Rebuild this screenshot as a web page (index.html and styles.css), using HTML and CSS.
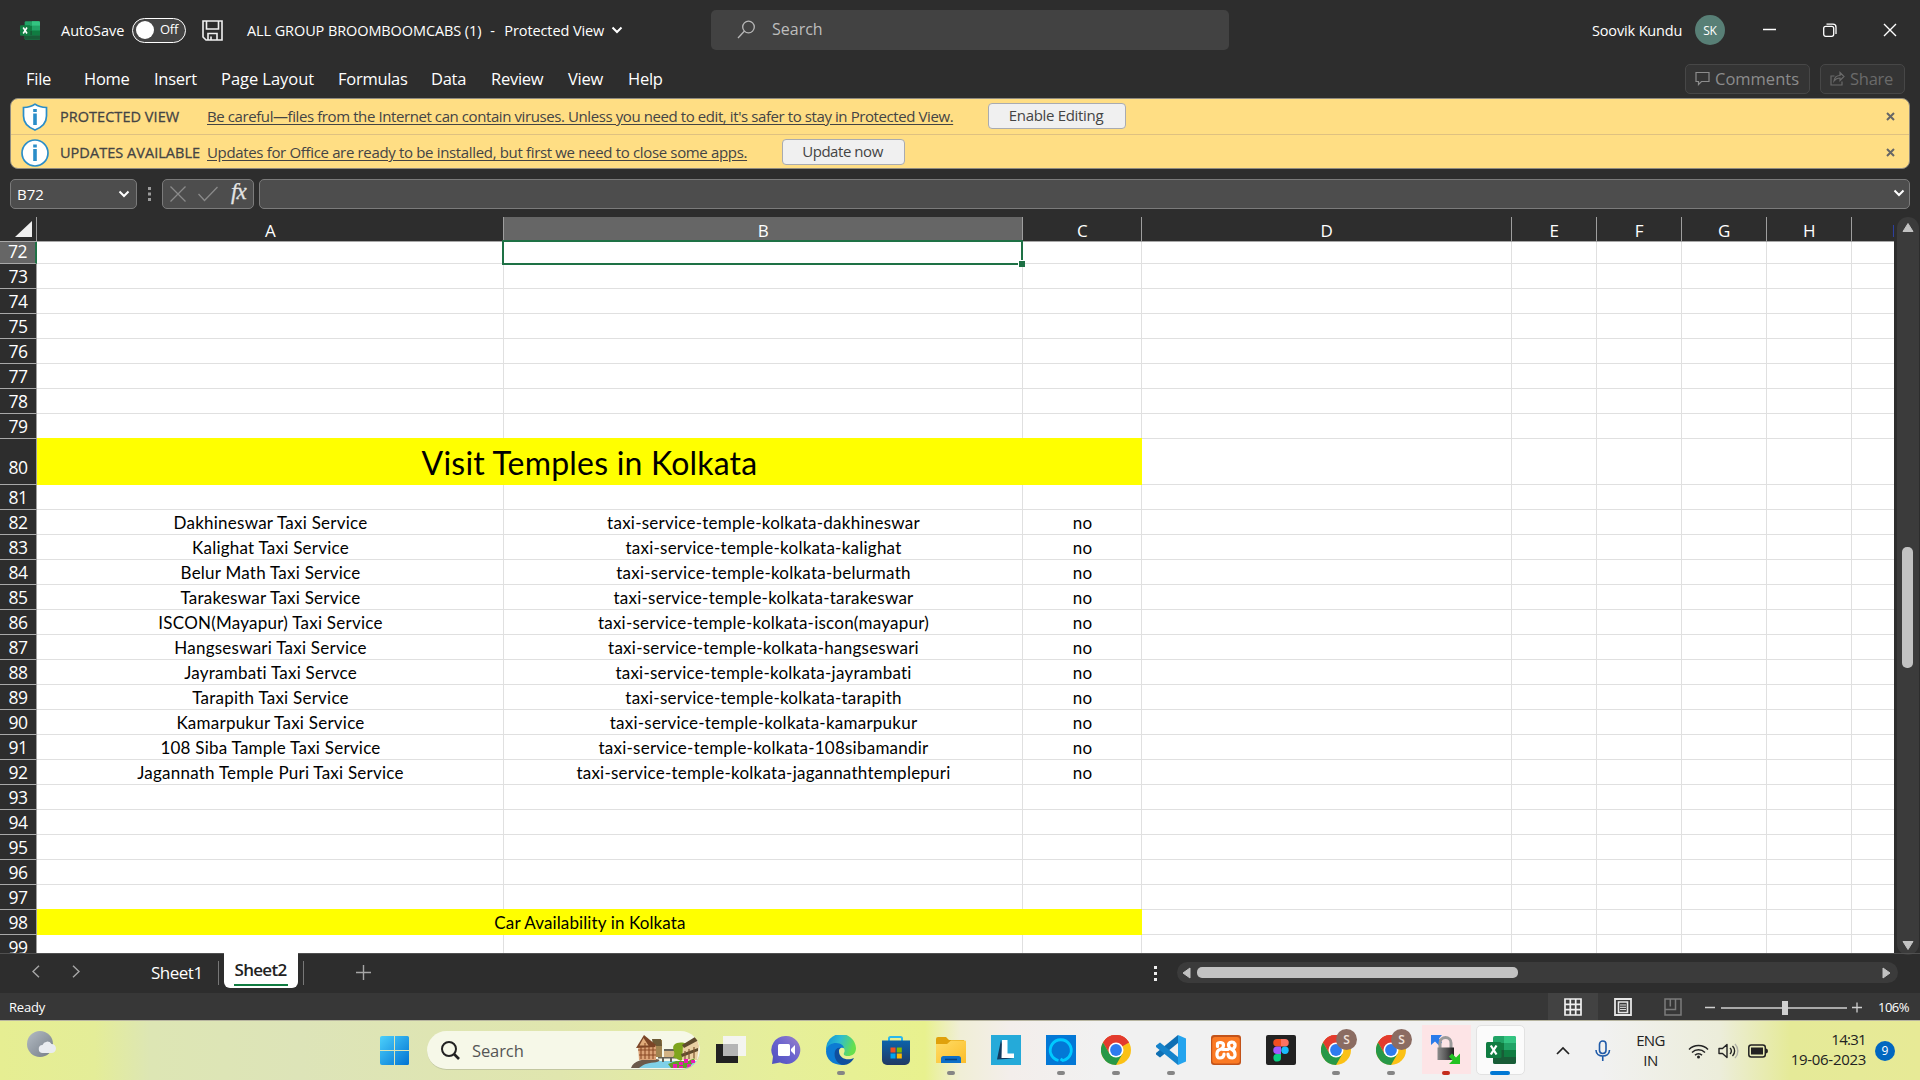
FILE: index.html
```html
<!DOCTYPE html>
<html lang="en">
<head>
<meta charset="utf-8">
<title>ALL GROUP BROOMBOOMCABS (1) - Excel</title>
<link rel="stylesheet" href="styles.css">
</head>
<body>
<svg width="0" height="0" class="defs">
  <defs>
    <linearGradient id="gWin" x1="0" y1="0" x2="1" y2="1"><stop offset="0" stop-color="#4cd0fb"/><stop offset="1" stop-color="#0073d3"/></linearGradient>
    <linearGradient id="gMoon" x1="0" y1="0" x2="1" y2="1"><stop offset="0" stop-color="#b4bcc4"/><stop offset="1" stop-color="#747c86"/></linearGradient>
    <linearGradient id="gChat" x1="1" y1="0" x2="0" y2="1"><stop offset="0" stop-color="#9a83c8"/><stop offset=".5" stop-color="#6a62cf"/><stop offset="1" stop-color="#4d50bd"/></linearGradient>
    <linearGradient id="gEdge" x1="0" y1="0" x2="1" y2=".3"><stop offset="0" stop-color="#0c8fd8"/><stop offset=".5" stop-color="#2dbcd0"/><stop offset="1" stop-color="#66e04c"/></linearGradient>
    <linearGradient id="gStore" x1="0" y1="0" x2="0" y2="1"><stop offset="0" stop-color="#0b63ab"/><stop offset="1" stop-color="#213a63"/></linearGradient>
    <linearGradient id="gFolder" x1="0" y1="0" x2="1" y2="1"><stop offset="0" stop-color="#ffdc66"/><stop offset="1" stop-color="#fbbd2a"/></linearGradient>
    <linearGradient id="gLock" x1="0" y1="0" x2="1" y2="0"><stop offset="0" stop-color="#8c8c8c"/><stop offset=".5" stop-color="#5a5a5a"/><stop offset="1" stop-color="#1e1e1e"/></linearGradient>
    <symbol id="excel" viewBox="0 0 30 30">
      <rect x="7" y="1" width="23" height="28" rx="2" fill="#21a366"/>
      <path d="M18 1h10a2 2 0 0 1 2 2v5H18z" fill="#33c481"/>
      <path d="M7 8h11v7H7z" fill="#107c41"/><path d="M18 8h12v7H18z" fill="#21a366"/>
      <path d="M18 15h12v7H18z" fill="#107c41"/><path d="M7 15h11v7H7z" fill="#185c37"/>
      <path d="M7 22h23v5a2 2 0 0 1-2 2H9a2 2 0 0 1-2-2z" fill="#185c37"/>
      <rect x="0" y="7" width="15.500" height="16" rx="1.500" fill="#107c41"/>
      <path d="M4.800 10.500 10.500 19.500M10.500 10.500 4.800 19.500" stroke="#fff" stroke-width="2.300"/>
    </symbol>
    <symbol id="chrome" viewBox="0 0 30 30">
      <circle cx="15" cy="15" r="15" fill="#fbc116"/>
      <path d="M15 15 2 7.500A15 15 0 0 1 28 7.500z" fill="#e33b2e"/>
      <path d="M15 7.500H28A15 15 0 0 0 2 7.500L8.500 18.700z" fill="#e33b2e"/>
      <path d="M2 7.500 8.500 18.750 15 22 21.500 18.750 15 30A15 15 0 0 1 2 7.500z" fill="#279847"/>
      <circle cx="15" cy="15" r="7.500" fill="#fff"/><circle cx="15" cy="15" r="5.900" fill="#2f7bee"/>
    </symbol>
    <symbol id="chev" viewBox="0 0 12 8"><path d="M1.500 1.500 6 6l4.500-4.500" fill="none" stroke="#fff" stroke-width="2"/></symbol>
  </defs>
</svg>

<header class="titlebar">
  <svg width="20" height="21"><use href="#excel"/></svg>
  <span>AutoSave</span>
  <div class="toggle"><i></i><span>Off</span></div>
  <svg width="21" height="21" viewBox="0 0 21 21" fill="none" stroke="#f0f0f0" stroke-width="1.600"><path d="M1 1h19v19H4l-3-3zM4.500 1v8h12V1M6 20v-6.500h9V20M9 20v-3.500"/></svg>
  <div class="docname"><span class="doc">ALL GROUP BROOMBOOMCABS (1)</span><span class="dash">-</span><span>Protected View</span><svg width="12" height="8"><use href="#chev"/></svg></div>
  <div class="search">
    <svg width="19" height="19" viewBox="0 0 19 19" fill="none" stroke="#b8b8b8" stroke-width="1.300"><circle cx="11.500" cy="7" r="5.800"/><path d="M7.500 11 1 18"/></svg>
    <span>Search</span>
  </div>
  <span class="user">Soovik Kundu</span>
  <span class="avatar">SK</span>
  <svg class="wb" width="14" height="14"><path d="M0 6.500h13" stroke="#fff" stroke-width="1.500"/></svg>
  <svg class="wb" width="14" height="14" viewBox="0 0 14 14" fill="none" stroke="#fff" stroke-width="1.300"><rect x=".7" y="3.300" width="10" height="10" rx="2"/><path d="M3.500 1.200H10a3 3 0 0 1 3 3V11"/></svg>
  <svg class="wb" width="14" height="14" viewBox="0 0 14 14"><path d="m1 1 12 12M13 1 1 13" stroke="#fff" stroke-width="1.400"/></svg>
</header>

<nav class="menu">
  <div class="tabs"><span>File</span><span>Home</span><span>Insert</span><span class="wide">Page Layout</span><span>Formulas</span><span>Data</span><span>Review</span><span>View</span><span>Help</span></div>
  <div class="mbtn comments"><svg width="15" height="15" viewBox="0 0 15 15" fill="none" stroke="#8c8c8c" stroke-width="1.200"><path d="M1 1.500h13v9H6.500L3.500 13.500v-3H1z"/></svg>Comments</div>
  <div class="mbtn share"><svg width="15" height="15" viewBox="0 0 15 15" fill="none" stroke="#6a6a6a" stroke-width="1.200"><path d="M4.500 5H1v9h11v-3.500M4 10c.5-4 3-5.500 6-5.500V1.500l4 4-4 4V7C7.500 7 5.500 8 4 10z"/></svg>Share</div>
</nav>

<section class="messages">
  <div class="msg">
    <svg class="mi" width="28" height="28" viewBox="0 0 28 28"><path d="M14 1.200C17 3.500 21 4.500 25.500 4.500V13c0 7-5 11.500-11.500 14C7.500 24.500 2.500 20 2.500 13V4.500C7 4.500 11 3.500 14 1.200z" fill="#fff" stroke="#2a8dc9" stroke-width="1.700"/><path d="M12.200 6h3.600v3h-3.600zM12.200 10.500h3.600V22h-3.600z" fill="#2a8dc9"/></svg>
    <span class="head">PROTECTED VIEW</span>
    <span class="link l1">Be careful—files from the Internet can contain viruses. Unless you need to edit, it's safer to stay in Protected View.</span>
    <span class="btn b1">Enable Editing</span>
    <svg class="x" width="9" height="9" viewBox="0 0 9 9"><path d="m1 1 7 7M8 1 1 8" stroke="#666" stroke-width="2"/></svg>
  </div>
  <div class="msg">
    <svg class="mi" width="28" height="28" viewBox="0 0 28 28"><circle cx="14" cy="14" r="13" fill="#fff" stroke="#2a8dc9" stroke-width="1.700"/><path d="M12.200 5.500h3.600v3h-3.600zM12.200 10h3.600v12h-3.600z" fill="#2a8dc9"/></svg>
    <span class="head">UPDATES AVAILABLE</span>
    <span class="link l2">Updates for Office are ready to be installed, but first we need to close some apps.</span>
    <span class="btn b2">Update now</span>
    <svg class="x" width="9" height="9" viewBox="0 0 9 9"><path d="m1 1 7 7M8 1 1 8" stroke="#666" stroke-width="2"/></svg>
  </div>
</section>

<section class="formula">
  <div class="box namebox"><span>B72</span><svg width="12" height="8"><use href="#chev"/></svg></div>
  <svg class="dots" width="4" height="14"><path d="M0 0h3v3H0zM0 5.500h3v3H0zM0 11h3v3H0z" fill="#9c9c9c"/></svg>
  <div class="box fx">
    <svg width="16" height="16" viewBox="0 0 16 16"><path d="m.5.5 15 15M15.500.5l-15 15" stroke="#8a8a8a" stroke-width="1.300"/></svg>
    <svg width="20" height="16" viewBox="0 0 20 16"><path d="m.5 8 6 6.500L19.500 1" fill="none" stroke="#8a8a8a" stroke-width="1.300"/></svg>
    <span>fx</span>
  </div>
  <div class="box input"><svg width="12" height="8"><use href="#chev"/></svg></div>
</section>

<main class="work">
  <div class="sheet">
    <div class="row cols"><b class="corner"><svg width="18" height="18"><path d="M17 1v16H0z" fill="#f0f0f0"/></svg></b><b>A</b><b class="sel">B</b><b>C</b><b>D</b><b>E</b><b>F</b><b>G</b><b>H</b><b class="last">I</b></div>
    <div class="row first"><b class="sel">72</b><span></span><span class="cursor"></span></div>
    <div class="row"><b>73</b></div>
    <div class="row"><b>74</b></div>
    <div class="row"><b>75</b></div>
    <div class="row"><b>76</b></div>
    <div class="row"><b>77</b></div>
    <div class="row"><b>78</b></div>
    <div class="row"><b>79</b></div>
    <div class="row tall"><b>80</b><span class="band big">Visit Temples in Kolkata</span></div>
    <div class="row"><b>81</b></div>
    <div class="row"><b>82</b><span>Dakhineswar Taxi Service</span><span>taxi-service-temple-kolkata-dakhineswar</span><span>no</span></div>
    <div class="row"><b>83</b><span>Kalighat Taxi Service</span><span>taxi-service-temple-kolkata-kalighat</span><span>no</span></div>
    <div class="row"><b>84</b><span>Belur Math Taxi Service</span><span>taxi-service-temple-kolkata-belurmath</span><span>no</span></div>
    <div class="row"><b>85</b><span>Tarakeswar Taxi Service</span><span>taxi-service-temple-kolkata-tarakeswar</span><span>no</span></div>
    <div class="row"><b>86</b><span>ISCON(Mayapur) Taxi Service</span><span>taxi-service-temple-kolkata-iscon(mayapur)</span><span>no</span></div>
    <div class="row"><b>87</b><span>Hangseswari Taxi Service</span><span>taxi-service-temple-kolkata-hangseswari</span><span>no</span></div>
    <div class="row"><b>88</b><span>Jayrambati Taxi Servce</span><span>taxi-service-temple-kolkata-jayrambati</span><span>no</span></div>
    <div class="row"><b>89</b><span>Tarapith Taxi Service</span><span>taxi-service-temple-kolkata-tarapith</span><span>no</span></div>
    <div class="row"><b>90</b><span>Kamarpukur Taxi Service</span><span>taxi-service-temple-kolkata-kamarpukur</span><span>no</span></div>
    <div class="row"><b>91</b><span>108 Siba Tample Taxi Service</span><span>taxi-service-temple-kolkata-108sibamandir</span><span>no</span></div>
    <div class="row"><b>92</b><span>Jagannath Temple Puri Taxi Service</span><span>taxi-service-temple-kolkata-jagannathtemplepuri</span><span>no</span></div>
    <div class="row"><b>93</b></div>
    <div class="row"><b>94</b></div>
    <div class="row"><b>95</b></div>
    <div class="row"><b>96</b></div>
    <div class="row"><b>97</b></div>
    <div class="row"><b>98</b><span class="band">Car Availability in Kolkata</span></div>
    <div class="row cut"><b>99</b></div>
  </div>
  <div class="vscroll">
    <svg width="12" height="11"><path d="M6 1.500 11 9.500H1z" fill="#c2c2c2" stroke="#c2c2c2" stroke-linejoin="round"/></svg>
    <i></i>
    <svg width="12" height="11"><path d="M6 9.500 11 1.500H1z" fill="#c2c2c2" stroke="#c2c2c2" stroke-linejoin="round"/></svg>
  </div>
</main>

<section class="sheetbar">
  <svg class="nav1" width="8" height="13" fill="none" stroke="#a6a6a6" stroke-width="1.400"><path d="M7 .7 1 6.500l6 5.800"/></svg>
  <svg class="nav2" width="8" height="13" fill="none" stroke="#a6a6a6" stroke-width="1.400"><path d="m1 .7 6 5.800-6 5.800"/></svg>
  <span class="s1">Sheet1</span>
  <i class="sep"></i>
  <span class="s2"><u>Sheet2</u></span>
  <i class="sep"></i>
  <svg class="plus" width="15" height="15"><path d="M7.500 0v15M0 7.500h15" stroke="#a6a6a6" stroke-width="1.400"/></svg>
  <svg class="more" width="4" height="15"><path d="M0 0h3v3H0zM0 6h3v3H0zM0 12h3v3H0z" fill="#eee"/></svg>
  <div class="hscroll">
    <svg width="9" height="12"><path d="M1 6 8 1v10z" fill="#c2c2c2" stroke="#c2c2c2" stroke-linejoin="round"/></svg>
    <i></i>
    <svg width="9" height="12"><path d="M8 6 1 1v10z" fill="#c2c2c2" stroke="#c2c2c2" stroke-linejoin="round"/></svg>
  </div>
</section>

<footer class="status">
  <span class="ready">Ready</span>
  <div class="view on"><svg width="18" height="18" viewBox="0 0 18 18" fill="none" stroke="#f0f0f0" stroke-width="1.700"><path d="M1 1h16v16H1zM6.300 1v16M11.700 1v16M1 6.300h16M1 11.700h16"/></svg></div>
  <div class="view"><svg width="18" height="18" viewBox="0 0 18 18" fill="none" stroke="#e6e6e6"><path d="M1 1h16v16H1z" stroke-width="1.800"/><path d="M4.500 4h9v10.500h-9z" stroke-width="1.600"/><path d="M6 7h6M6 9.300h6M6 11.600h6" stroke-width="1"/></svg></div>
  <div class="view"><svg width="18" height="18" viewBox="0 0 18 18" fill="none" stroke="#7c7c7c" stroke-width="1.500"><path d="M1 1h16v16H1zM1 11.500h10.500V1M6.300 1v7.500"/></svg></div>
  <svg class="zoom" width="160" height="18"><path d="M3 9.500h10M19 10h126M150 9.500h10M155 4.500v10" stroke="#cfcfcf" stroke-width="1.300"/><path d="M80 3h6v14h-6z" fill="#cfcfcf"/></svg>
  <span class="pct">106%</span>
</footer>

<footer class="taskbar">
  <svg class="weather" width="30" height="28"><circle cx="13" cy="13" r="13" fill="url(#gMoon)"/><path d="M16 22a4 4 0 0 1-.5-8 5 5 0 0 1 9-1 4.500 4.500 0 0 1 0 9z" fill="#e9ecf0"/></svg>
  <svg class="start" width="30" height="30"><path d="M2 0h12v14H0V2a2 2 0 0 1 2-2zM15 0h12.500A1.500 1.500 0 0 1 29 1.500V14H15zM0 15h14v14H2a2 2 0 0 1-2-2zM15 15h14v12.500a1.500 1.500 0 0 1-1.500 1.500H15z" fill="url(#gWin)"/></svg>
  <div class="tsearch">
    <svg width="19" height="19" viewBox="0 0 19 19" fill="none" stroke="#222" stroke-width="2"><circle cx="8" cy="8" r="7"/><path d="m13 13 5 5" stroke-width="2.600"/></svg>
    <span>Search</span>
    <svg class="art" width="69" height="38" viewBox="0 0 69 38">
      <path d="M2 36c6-5 14-6 27-6h38l-6 7H2z" fill="#7fd0e8"/>
      <path d="M0 37c3-8 12-9 24-9 7 0 5 3-1 3.500-8 .5-11 2.500-15 5.500z" fill="#6b5a4c"/>
      <path d="M22 9h9v17h-9z" fill="#a08450"/><path d="M21 8h9l1 7h-9z" fill="#6c5a37"/>
      <path d="M33 19h11v7H33z" fill="#d2b384"/><path d="M33 18h11v2H33zM27 26h18v1.500H27zM31 27h2v4h-2zM39 27h2v4h-2z" fill="#66645a"/>
      <path d="M7 14h18v15H8z" fill="#dba276"/><path d="M5 17 13 4l12 10-1 2z" fill="#7b4527"/><path d="M12.500 7 8.500 14.500h9z" fill="#e0ab7a"/>
      <path d="M7 19h18M8 24h17M10 15v13M14 12v16M18 15v13M22 16v12" stroke="#8a4a26" stroke-width="1.100"/>
      <path d="M43 14c3-3 9-3 12-1l2 8-7 9-8-4c4-4-2-8 1-12z" fill="#7ea51d"/>
      <path d="M52 14 66 6l2 9-2 14H51z" fill="#e9cfa3"/><path d="m51 14 13-8 4 3-15 8zM50 23l17-6v3l-16 6z" fill="#5e4a2d"/><path d="M54 20v9M58 18v10M63 16v11" stroke="#7d552f" stroke-width="1.200"/>
      <path d="m37 33 8-3h12l7-3-3 6-6 4H40z" fill="#5f9e2b"/>
      <path d="M42 33h4v4h-4zM48 31h4v3h-4zM53 28h4v4h-4zM56 33h4v4h-4zM60 29h4v3h-4zM48 35h4v2h-4z" fill="#ea1bb0"/>
    </svg>
  </div>
  <div class="apps">
    <div class="app"><svg width="30" height="30"><path d="M0 9h22v19H0z" fill="#222"/><path d="M7 1h23v20H7z" fill="#f4f4f4" opacity=".95"/><path d="M7 9h15v12H7z" fill="#b5b5b5"/></svg></div>
    <div class="app"><svg width="30" height="30"><path d="M15 1a14 14 0 1 1-6 26.500L1 29l1-7.500A14 14 0 0 1 15 1z" fill="url(#gChat)"/><rect x="7" y="9" width="12" height="12" rx="1.500" fill="#fff"/><path d="m20 14 4-4v10l-4-4z" fill="#fff"/></svg></div>
    <div class="app"><svg width="30" height="30"><path d="M0 15A15 15 0 0 1 30 13c0 6-4 8-8 8-3 0-5-1-4-3 2-4-1-6-3-6-6 0-11 4-15 3z" fill="url(#gEdge)"/><path d="M0 16C1 10 6 8 10 8c5 0 8 3 8 5-5-1-7 3-6 7 1 5 5 9 6 9.700C8 31 0 25 0 16z" fill="#0d7bd3"/><path d="M9 16c-2 7 3 14 9 14 4 0 8-3 10-7-6 3-15 1-15-7 0-2 1-3 2-3.500-3 0-5 1-6 3.500z" fill="#104f9e"/></svg><i></i></div>
    <div class="app"><svg width="30" height="30"><path d="M8 7V3.500A1.500 1.500 0 0 1 9.500 2h10A1.500 1.500 0 0 1 21 3.500V7" fill="none" stroke="#29b8ee" stroke-width="2"/><path d="M1 5.500h28V25a5 5 0 0 1-5 5H6a5 5 0 0 1-5-5z" fill="url(#gStore)"/><path d="M9.500 12.500h5v5h-5z" fill="#f25022"/><path d="M15.800 12.500h5v5h-5z" fill="#7fba00"/><path d="M9.500 18.500h5v5h-5z" fill="#00a4ef"/><path d="M15.800 18.500h5v5h-5z" fill="#ffb900"/></svg></div>
    <div class="app"><svg width="30" height="30"><path d="M0 4a2 2 0 0 1 2-2h8l3 3h15v6H0z" fill="#e0a10b"/><path d="M0 9h11l4-3.500h14a1 1 0 0 1 1 1V28H0z" fill="url(#gFolder)"/><path d="M5 28v-4.500A2.500 2.500 0 0 1 7.500 21h15a2.500 2.500 0 0 1 2.500 2.500V28z" fill="#0d6fc8"/><path d="M9 24.500h12" stroke="#07427f" stroke-width="1.500"/></svg><i></i></div>
    <div class="app"><svg width="30" height="30"><path d="M0 0h30v30H0z" fill="#25aad9"/><path d="M10 5 6 24.500 15 24l8-1-9-1z" fill="#123a5e"/><path d="M11 5h5.500v13.500H23V23H10.500z" fill="#fff"/></svg></div>
    <div class="app"><svg width="30" height="30"><path d="M0 0h30v30H0z" fill="#0378d6"/><path d="M12.500 25.500A10.500 10.500 0 1 1 17 25.500L14.500 24" fill="none" stroke="#00caff" stroke-width="2.800"/></svg><i></i></div>
    <div class="app"><svg width="30" height="30"><use href="#chrome"/></svg><i></i></div>
    <div class="app"><svg width="30" height="30"><path d="M22 0v8L4 22.500 0 19.500V18z" fill="#0f6fb3"/><path d="M22 30v-8L4 7.500 0 10.500V12z" fill="#1583cb"/><path d="m22 0 8 3.500v23L22 30z" fill="#24a4ee"/></svg><i></i></div>
    <div class="app"><svg width="30" height="30"><rect width="30" height="30" rx="3" fill="#c2531a"/><rect x="1.200" y="2" width="27.600" height="26.500" rx="3" fill="#fb7a24"/><path d="M6.500 8.500c1-1.500 6-1.500 6 1.500 0 2-1.500 4-3.500 4.500-4 1-4 8.500-.5 8.500s4.500-2 4.500-4M12 14.500h5M23.500 9c0-3-6-2.500-6 1 0 2 1.500 3.500 3.500 4.500 4 2 4 8.500.5 8.500s-4.500-2-4.500-4M6.500 8.500v3M24 9c.3 2-.5 4-2 5" fill="none" stroke="#fff" stroke-width="3.200" stroke-linecap="round" stroke-linejoin="round"/></svg></div>
    <div class="app"><svg width="30" height="30"><rect width="30" height="30" rx="2" fill="#222"/><path d="M15 4h-4a3.700 3.700 0 0 0 0 7.500h4z" fill="#f24e1e"/><path d="M15 4h4a3.700 3.700 0 0 1 0 7.500h-4z" fill="#ff7262"/><path d="M15 11.500h-4a3.700 3.700 0 0 0 0 7.500h4z" fill="#a259ff"/><circle cx="19" cy="15.200" r="3.700" fill="#1abcfe"/><path d="M11 19h4v3.700a3.800 3.800 0 1 1-4-3.700z" fill="#0acf83"/></svg></div>
    <div class="app"><svg width="30" height="30"><use href="#chrome"/></svg><em>S</em><i></i></div>
    <div class="app"><svg width="30" height="30"><use href="#chrome"/></svg><em>S</em><i></i></div>
    <div class="app locked"><svg width="30" height="30"><path d="M0 0h11L8 3.500l3 4-3 3-4-4L0 10z" fill="#2a7bea"/><path d="M9 14V8a5.500 5.500 0 0 1 11 0v6" fill="none" stroke="#9a9a9a" stroke-width="3"/><path d="M6.500 12.500H23V25H6.500z" fill="url(#gLock)"/><path d="M29 29H18l3.500-3.500-3.500-4 3-3 4 4 4-4z" fill="#22c322"/></svg><i></i></div>
    <div class="app active"><svg width="30" height="30"><use href="#excel"/></svg><i></i></div>
  </div>
  <div class="tray">
    <svg class="up" width="14" height="9"><path d="m1 8 6-6 6 6" fill="none" stroke="#222" stroke-width="1.700"/></svg>
    <svg class="mic" width="16" height="22" fill="none" stroke="#1f5aa8" stroke-width="1.600"><rect x="4.500" y="1" width="6.500" height="12.500" rx="3.250"/><path d="M1 10c0 8 13.500 8 13.500 0M7.750 16.500V21"/></svg>
    <div class="lang"><span>ENG</span><span>IN</span></div>
    <svg class="wifi" width="21" height="16" fill="none" stroke="#222" stroke-width="1.500"><path d="M1 6.500a13.500 13.500 0 0 1 19 0M4 9.500a9.200 9.200 0 0 1 13 0M7 12.300a5 5 0 0 1 7 0"/><circle cx="10.500" cy="14" r="1.500" fill="#222" stroke="none"/></svg>
    <svg class="vol" width="21" height="16" fill="none" stroke="#222" stroke-width="1.400"><path d="M1 5.500h3.500L9 1.500v13l-4.500-4H1z" stroke-linejoin="round"/><path d="M12 5a4 4 0 0 1 0 6M14.500 3a7 7 0 0 1 0 10"/><path d="M17 1a10 10 0 0 1 0 14" stroke="#b0b0a8"/></svg>
    <svg class="bat" width="20" height="14"><rect x=".8" y="1" width="16.500" height="12" rx="2.500" fill="none" stroke="#222" stroke-width="1.500"/><path d="M3 3.500h12v7H3zM18 4.500a2 2.500 0 0 1 0 5z" fill="#222"/></svg>
    <div class="clock"><span>14:31</span><span class="date">19-06-2023</span></div>
    <span class="count">9</span>
  </div>
</footer>
</body>
</html>
```
FILE: styles.css
```css
*, *::before, *::after { box-sizing: border-box; }
body {
  margin: 0; width: 1920px; height: 1080px; overflow: hidden;
  background: #2d2d2d; color: #fff;
  font-family: "Open Sans", "Noto Sans", sans-serif; font-size: 14.5px;
  display: flex; flex-direction: column; white-space: nowrap;
}
.defs { position: absolute; }
svg { display: block; flex: none; }
i, em { font-style: normal; }

.titlebar {
  height: 60px; padding-left: 20px;
  display: grid; align-items: center;
  grid-template-columns: 41px 71px 70px 45px 464px 881px 103px 45px 60px 60px 60px;
}
.toggle { width: 54px; height: 25px; border: 1.5px solid #fff; border-radius: 13px; display: flex; align-items: center; padding-left: 3px; gap: 7px; background: #444; font-size: 13px; line-height: 18px; letter-spacing: -.3px; }
.toggle span { margin: -2px 0 0 -1px; }
.toggle i { width: 18px; height: 18px; border-radius: 50%; background: #fff; }
.docname { display: flex; align-items: center; letter-spacing: -.1px; gap: 7px; }
.docname .dash { width: 6px; margin: 0 1px 0 2px; }
.search { width: 518px; height: 40px; border-radius: 5px; background: #424242; color: #bdbdbd; font-size: 16px; display: flex; align-items: center; padding: 0 0 2px 26px; gap: 16px; }
.avatar { width: 30px; height: 30px; border-radius: 50%; background: #587f76; font-size: 12px; text-align: center; line-height: 31px; letter-spacing: -.2px; }
.user { letter-spacing: -.15px; }
.wb { justify-self: center; }

.menu { height: 38px; display: flex; align-items: center; padding-left: 26px; font-size: 16.5px; }
.tabs { flex: 1; display: grid; grid-template-columns: 58px 70px 67px 117px 93px 60px 77px 60px 60px; letter-spacing: -.27px; margin-top: -2px; }
.tabs .wide { letter-spacing: -.05px; }
.mbtn { height: 30px; border: 1px solid #474747; border-radius: 5px; background: #343434; display: flex; align-items: center; gap: 5px; padding: 0 0 2px 9px; margin-right: 10px; color: #8c8c8c; }
.comments { width: 125px; }
.share { width: 85px; margin-right: 15px; color: #6a6a6a; letter-spacing: -.27px; }

.messages { height: 71px; margin: 0 10px; border: 1px solid #8f8b80; border-radius: 8px; background: #ffde84; color: #444; font-size: 15px; }
.msg { height: 35px; display: flex; align-items: center; padding: 0 14px 0 10px; }
.msg + .msg { height: 36px; border-top: 1px solid #dfc181; }
.mi { margin-right: 11px; }
.head { width: 147px; font-weight: 500; font-size: 14.5px; letter-spacing: .04px; -webkit-text-stroke: .3px #444; margin-top: -1px; }
.link { text-decoration: underline; text-underline-offset: 2px; margin: -2px 35px 0 0; }
.l1 { letter-spacing: -.41px; width: 746px; }
.l2 { letter-spacing: -.34px; width: 540px; }
.btn { height: 26px; border: 1px solid #a9abb0; border-radius: 4px; background: #f0f0f0; line-height: 23px; text-align: center; letter-spacing: -.32px; margin-top: -1px; padding-right: 2px; }
.b1 { width: 138px; }
.b2 { width: 123px; letter-spacing: -.45px; }
.x { margin-left: auto; }

.formula { height: 48px; padding: 2px 10px 0; display: flex; align-items: center; }
.box { height: 30px; border: 1px solid #7b7b7b; border-radius: 5px; background: #4d4d4d; display: flex; align-items: center; }
.namebox { width: 127px; padding: 0 6px; justify-content: space-between; font-size: 15px; }
.dots { margin: 0 10px 0 11px; }
.fx { width: 92px; padding-left: 7px; gap: 12px; }
.fx span { font: italic 23px/24px "Liberation Serif", serif; margin: -4px 0 0 1px; color: #e4e4e4; letter-spacing: -1px; -webkit-text-stroke: .3px #e4e4e4; }
.input { flex: 1; margin-left: 5px; justify-content: flex-end; padding: 0 4px 3px 0; }

.work { height: 736px; display: flex; }
.sheet {
  width: 1894px; height: 736px; overflow: hidden; color: #000;
  background-color: #fff;
  background-image: linear-gradient(#e0e0e0, #e0e0e0), linear-gradient(#e0e0e0, #e0e0e0), linear-gradient(#e0e0e0, #e0e0e0), linear-gradient(#e0e0e0, #e0e0e0), linear-gradient(#e0e0e0, #e0e0e0), linear-gradient(#e0e0e0, #e0e0e0), linear-gradient(#e0e0e0, #e0e0e0), linear-gradient(#e0e0e0, #e0e0e0);
  background-size: 1px 100%; background-repeat: no-repeat;
  background-position: 503px 0, 1022px 0, 1141px 0, 1511px 0, 1596px 0, 1681px 0, 1766px 0, 1851px 0;
}
.row { height: 25px; display: grid; grid-template-columns: 37px 467px 519px 119px 370px 85px 85px 85px 85px 85px; grid-template-rows: minmax(0, 1fr); border-bottom: 1px solid #e0e0e0; width: 1937px; }
.row b { font-weight: 400; color: #fff; background: #2d2d2d; border-right: 1px solid #9e9e9e; font-size: 17.5px; line-height: 24px; text-align: center; letter-spacing: -.5px; margin-bottom: -1px; border-bottom: 1px solid #a8a8a8; }
.row > span { font: 17px/25px "Lato", sans-serif; letter-spacing: .24px; text-align: center; }
.cols b { line-height: 27px; font-size: 17px; }
.row b.sel { background: #666; }
.cols b.sel { border-bottom: 2px solid #1e7145; }
.cols .corner { display: flex; justify-content: flex-end; padding: 3px 3px 0 0; }
.cols .last { color: #2f62c4; }
.first { height: 22px; }
.first b { line-height: 19px; }
.first b.sel { border-right: 2px solid #1e7145; }
/* active cell outline runs over the neighbouring gridlines */
.cursor { position: relative; }
.cursor::before { content: ""; position: absolute; left: -2px; right: 0; top: -2px; height: 25px; border: 2px solid #1e7145; }
.cursor::after { content: ""; position: absolute; right: -2px; bottom: -4px; width: 7px; height: 7px; background: #1e7145; border: 1px solid #fff; border-width: 1px 0 0 1px; }
.tall { height: 46px; }
.tall b { line-height: 57px; overflow: hidden; }
.row .band { grid-column: 2 / 5; background: #ff0; margin-top: -1px; margin-bottom: -1px; line-height: 27px; letter-spacing: .12px; padding-left: 1px; }
.tall .big { font-size: 32px; line-height: 49px; letter-spacing: .2px; padding: 0; }
.cut { border: 0; }

.vscroll { width: 22px; height: 738px; margin-left: 3px; border-radius: 11px; background: #3b3b3b; display: flex; flex-direction: column; align-items: center; padding: 5px 1px 4px 0; }
.vscroll i { width: 11px; height: 121px; margin: 314px 0 auto; border-radius: 5px; background: #c2c2c2; }

.sheetbar { height: 40px; display: flex; padding: 0 22px 0 32px; border-top: 1px solid #505050; }
.sheetbar > svg { margin-top: 11px; }
.nav2 { margin-left: 32px; }
.s1 { margin: 6px 0 0 71px; width: 67px; font-size: 17px; line-height: 25px; letter-spacing: -.5px; }
.sep { width: 1px; height: 24px; background: #777; margin-top: 7px; }
.s2 { width: 74px; height: 35px; margin: -1px 5px 0; background: #fff; border-radius: 0 0 6px 6px; color: #222; font-size: 17px; font-weight: 600; letter-spacing: -.7px; display: flex; justify-content: center; z-index: 1; }
.s2 u { text-decoration: none; width: 54px; height: 33px; line-height: 34px; padding-left: .5px; border-bottom: 2px solid #107c41; }
.plus { margin-left: 52px; }
.sheetbar .more { margin: 12px 19px 0 auto; }
.hscroll { width: 721px; height: 21px; margin-top: 8px; border-radius: 11px; background: #3b3b3b; display: flex; align-items: center; padding: 0 7px 0 5px; }
.hscroll i { width: 321px; height: 11px; margin: 0 auto 0 6px; border-radius: 5px; background: #c2c2c2; }

.status { height: 27px; background: #373737; display: flex; align-items: center; padding-left: 9px; font-size: 13px; }
.ready { flex: 1; letter-spacing: -.2px; }
.view { width: 50px; height: 27px; display: flex; align-items: center; justify-content: center; }
.on { background: #424242; }
.zoom { margin-left: 4px; }
.pct { width: 42px; margin-left: 16px; letter-spacing: -.5px; }

.taskbar {
  height: 60px; border-top: 1px solid #b7b5a0; display: flex; color: #222;
  background: linear-gradient(90deg, #e6ee92 0, #e4ed98 95px, #dde6b4 150px, #dde4b8 300px, #e0e6ae 560px, #e6ef9a 780px, #e8f18e 925px, #f0eed6 960px, #f3eeeb 1010px, #f1f1f1 1100px, #f1f1f1 1600px, #ecedda 1720px, #e5ea98 1790px, #e7ea96 1920px);
}
.weather { margin: 10px 0 0 27px; }
.start { margin: 15px 0 0 323px; }
.tsearch { width: 273px; height: 39px; margin: 10px 0 0 17px; border-radius: 20px; background: #f6f8e8; border-bottom: 1px solid #c2c7a0; overflow: hidden; display: flex; align-items: center; padding-left: 14px; font-size: 16.5px; color: #555; letter-spacing: -.1px; }
.tsearch span { margin-left: 12px; }
.art { margin-left: auto; }
.apps { display: flex; margin-left: 3px; }
.app { width: 55px; height: 59px; padding-top: 14px; display: flex; justify-content: center; position: relative; }
.app i { position: absolute; left: 24px; bottom: 5px; width: 8px; height: 4px; border-radius: 2px; background: #858585; }
.app em { position: absolute; left: 28px; top: 8px; width: 21px; height: 21px; border-radius: 50%; background: #8b6c62; color: #f0e4de; font-size: 12px; font-weight: 600; line-height: 21px; text-align: center; }
.locked { background: linear-gradient(#fde4e6, #fde4e6) 4px 4px / 49px 49px no-repeat; }
.locked i { background: #c42b1c; }
.active::before { content: ""; position: absolute; left: 3px; top: 4px; width: 49px; height: 50px; border-radius: 5px; background: #fbfbfb; border: 1px solid #e2e2e2; }
.active svg { position: relative; }
.active i { left: 17px; width: 20px; background: #0078d4; }
.tray { display: flex; align-items: center; flex: 1; }
.up { margin-left: 28px; }
.mic { margin-left: 25px; }
.lang { display: flex; flex-direction: column; align-items: center; margin-left: 22px; width: 35px; font-size: 15px; line-height: 20px; letter-spacing: -.6px; margin-top: -2px; }
.wifi { margin-left: 20px; }
.vol { margin-left: 9px; }
.bat { margin-left: 9px; }
.clock { width: 98px; display: flex; flex-direction: column; align-items: flex-end; font-size: 15px; line-height: 20px; letter-spacing: -.7px; margin-top: -3px; }
.clock .date { letter-spacing: -.3px; }
.count { width: 20px; height: 20px; margin-left: 9px; border-radius: 50%; background: #0067c0; color: #fff; font-size: 12px; line-height: 20px; text-align: center; }
```
